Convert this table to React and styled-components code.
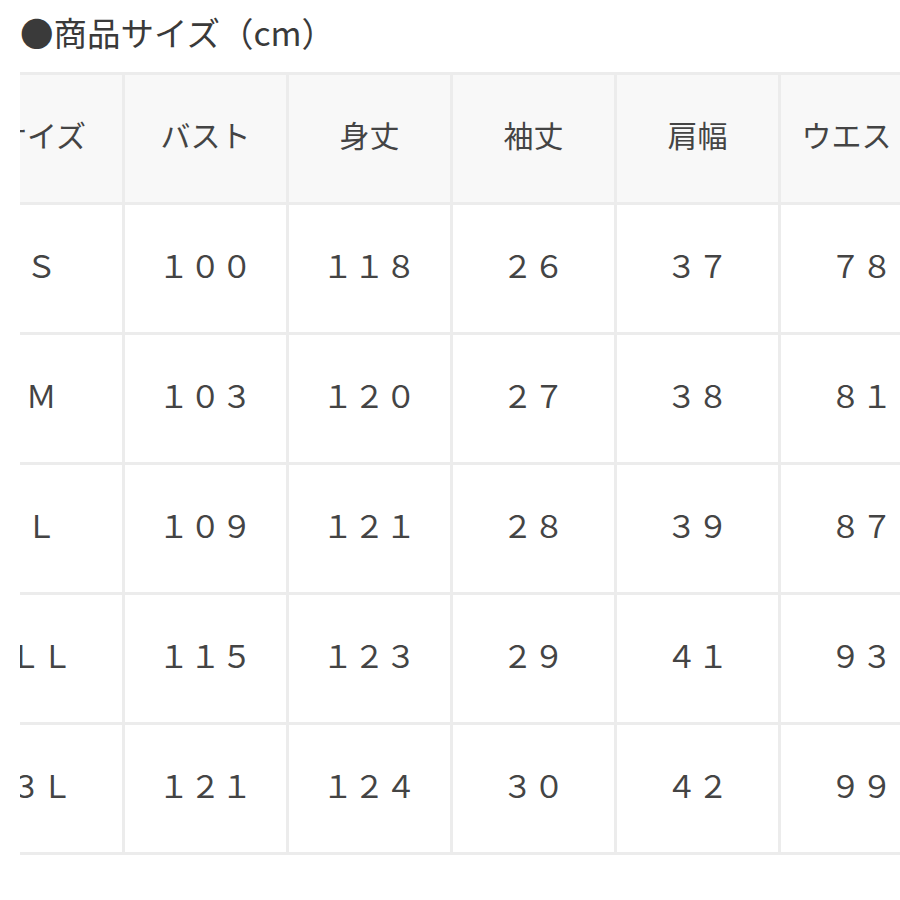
import React from 'react';
import styled, { createGlobalStyle } from 'styled-components';

const GlobalStyle = createGlobalStyle`
  html, body {
    margin: 0;
    padding: 0;
    background: #ffffff;
  }
  body {
    font-family: "Noto Sans CJK JP", "Noto Sans", sans-serif;
    color: #3a3a3a;
  }
`;

const Page = styled.div`
  width: 900px;
  height: 900px;
  overflow: hidden;
  background: #ffffff;
`;

const Title = styled.h2`
  margin: 0;
  height: 72px;
  padding-left: 20px;
  padding-bottom: 8px;
  box-sizing: border-box;
  display: flex;
  align-items: center;
  font-size: 33.5px;
  font-weight: 400;
  color: #3a3a3a;
  line-height: 1;
`;

const ScrollBox = styled.div`
  margin-left: 20px;
  width: 880px;
  overflow: hidden;
`;

const Table = styled.table`
  border-collapse: collapse;
  margin-left: -62px;
  table-layout: fixed;
  width: 1151px;
`;

const Cell = styled.td`
  width: 161px;
  height: 118px;
  padding: 0 0 9px;
  border: 3px solid #ececec;
  text-align: center;
  vertical-align: middle;
  font-size: ${(p) => (p.$head ? '30px' : '31px')};
  letter-spacing: ${(p) => (p.$head ? '0' : '0.5px')};
  font-weight: 400;
  color: #444444;
  background: ${(p) => (p.$head ? '#f8f8f8' : '#ffffff')};
  white-space: nowrap;
  overflow: hidden;
`;

const headers = ['サイズ', 'バスト', '身丈', '袖丈', '肩幅', 'ウエスト', '裄丈'];

const rows = [
  ['Ｓ', '１００', '１１８', '２６', '３７', '７８', '６５'],
  ['Ｍ', '１０３', '１２０', '２７', '３８', '８１', '６６'],
  ['Ｌ', '１０９', '１２１', '２８', '３９', '８７', '６７'],
  ['ＬＬ', '１１５', '１２３', '２９', '４１', '９３', '６９'],
  ['３Ｌ', '１２１', '１２４', '３０', '４２', '９９', '７０'],
];

export default function App() {
  return (
    <Page>
      <GlobalStyle />
      <Title>●商品サイズ（cm）</Title>
      <ScrollBox>
        <Table>
          <tbody>
            <tr>
              {headers.map((h) => (
                <Cell key={h} $head>{h}</Cell>
              ))}
            </tr>
            {rows.map((r) => (
              <tr key={r[0]}>
                {r.map((v, i) => (
                  <Cell key={i}>{v}</Cell>
                ))}
              </tr>
            ))}
          </tbody>
        </Table>
      </ScrollBox>
    </Page>
  );
}
